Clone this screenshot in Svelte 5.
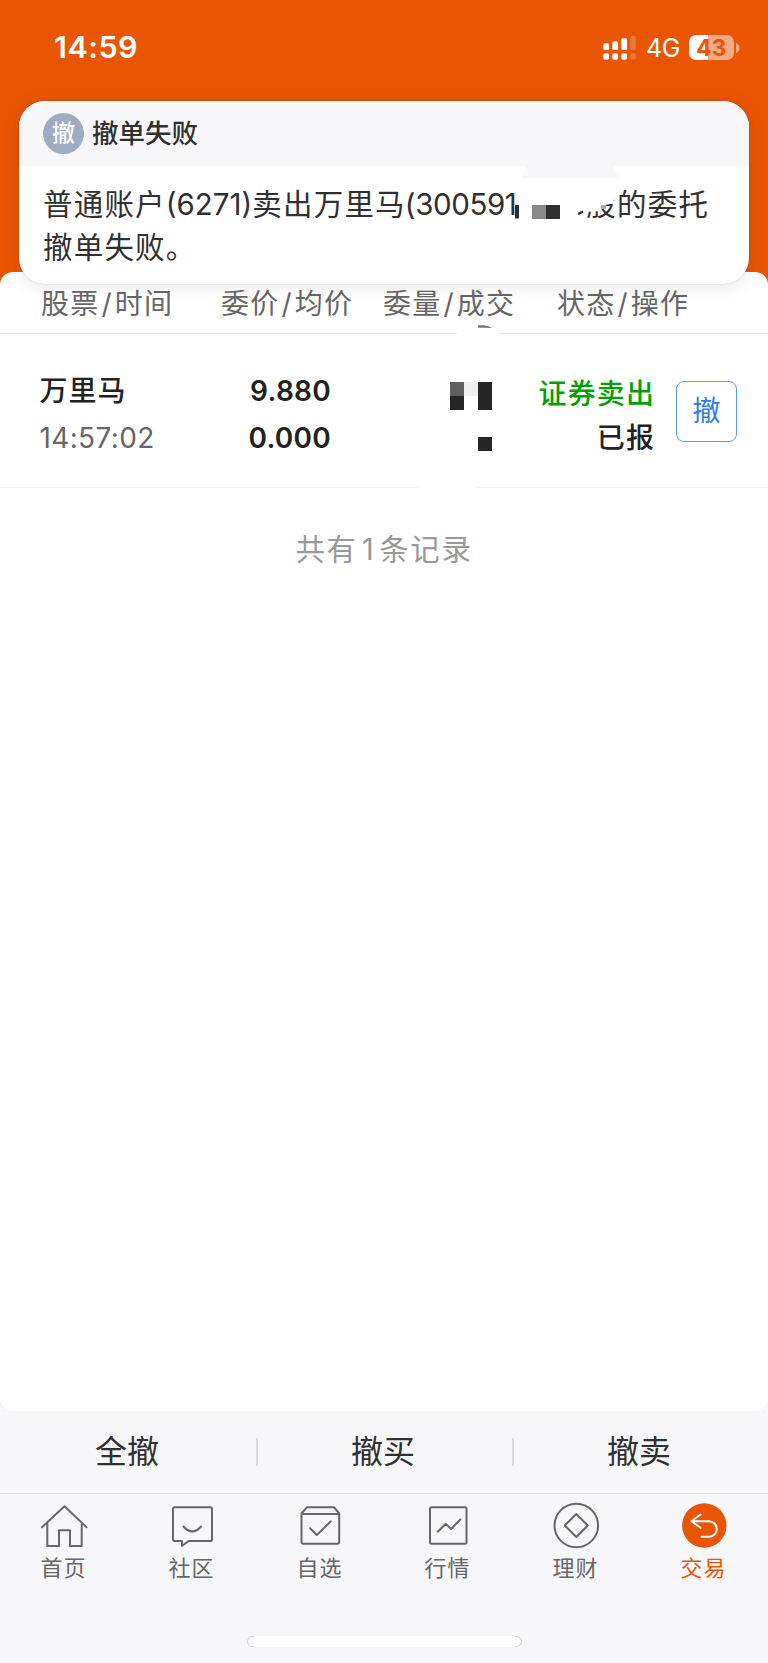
<script>
  const actions = ['全撤', '撤买', '撤卖'];
  const tabs = [
    { id: 'home', label: '首页' },
    { id: 'community', label: '社区' },
    { id: 'watch', label: '自选' },
    { id: 'market', label: '行情' },
    { id: 'wealth', label: '理财' },
    { id: 'trade', label: '交易' }
  ];
</script>

<div class="screen">
  <header class="top">
    <div class="status">
      <span class="clock">14:59</span>
      <svg class="signal" width="34" height="26" viewBox="0 0 34 26" fill="#fff">
        <rect x="0.3" y="8.3" width="5.8" height="6.8" rx="1.6" />
        <rect x="9.3" y="6.3" width="5.8" height="8.8" rx="1.6" />
        <rect x="18.3" y="3.3" width="5.8" height="11.8" rx="1.6" />
        <rect x="0.3" y="18.3" width="5.8" height="6.4" rx="1.6" />
        <rect x="9.3" y="18.3" width="5.8" height="6.4" rx="1.6" />
        <rect x="18.3" y="18.3" width="5.8" height="6.4" rx="1.6" />
        <g opacity=".2">
          <rect x="27.2" y="0.8" width="5.6" height="14.3" rx="1.6" />
          <rect x="27.2" y="18.3" width="5.6" height="6.4" rx="1.6" />
        </g>
      </svg>
      <span class="network">4G</span>
      <div class="battery"><span>43</span></div>
      <svg class="nub" width="4" height="10" viewBox="0 0 4 10"><path d="M0 0Q3.500 1.500 3.500 5T0 10Z" fill="#fff" opacity=".5" /></svg>
    </div>
  </header>

  <main class="panel">
    <div class="cols">
      <span>股票<b>/</b>时间</span>
      <span>委价<b>/</b>均价</span>
      <span>委量<b>/</b>成交</span>
      <span>状态<b>/</b>操作</span>
      <i class="gap"></i>
      <svg class="speck" width="14" height="4" viewBox="0 0 14 4"><path d="M0 .3H6Q11 .8 14 3L6 2.8H0Z" fill="#777" /></svg>
    </div>
    <div class="row">
      <div class="stock">
        <span class="name">万里马</span>
        <span class="time">14:57:02</span>
      </div>
      <div class="price">
        <span>9.880</span>
        <span>0.000</span>
      </div>
      <svg class="amount" width="42" height="70" viewBox="0 0 42 70" shape-rendering="crispEdges">
        <rect width="14" height="14" fill="#606060" />
        <rect x="14" width="14" height="14" fill="#efefef" />
        <rect y="14" width="14" height="14" fill="#262626" />
        <rect x="28" width="14" height="28" fill="#262626" />
        <rect x="28" y="55" width="14" height="14" fill="#262626" />
      </svg>
      <div class="state">
        <span class="sell">证券卖出</span>
        <span>已报</span>
      </div>
      <button class="cancel">撤</button>
      <i class="gap"></i>
    </div>
    <p class="total">共有<b>1</b>条记录</p>
  </main>

  <div class="actions">
    {#each actions as a}
      <button>{a}</button>
    {/each}
  </div>

  <nav class="tabs">
    {#each tabs as t}
      <div class="tab" class:active={t.id === 'trade'}>
        <svg width="48" height="48" viewBox="0 0 48 48" fill="none" stroke="currentColor" stroke-width="2" stroke-linejoin="round" stroke-linecap="round">
          {#if t.id === 'home'}
            <path d="M2 25.2 24.5 4.2 46.500 25.2M7.3 20.5V44H19V28.2H30V44H41.7V20.5" />
          {:else if t.id === 'community'}
            <path d="M6.2 5.2H42.2Q44 5.2 44 7V37.2Q44 39 42.2 39H20.5L14 44V39H7.2Q5 39 5 37.2V7Q5 5.2 6.8 5.2Z" />
            <path d="M15.5 24.5Q24.3 34.5 33 24.5" />
          {:else if t.id === 'watch'}
            <path d="M5.5 11.5 11 5.2H38L43.2 11.5V39.7Q43.2 41.7 41.2 41.7H7.5Q5.5 41.7 5.5 39.7ZM5.5 12H43.2" />
            <path d="M14 26.3 20.8 33 34.7 19.5" />
          {:else if t.id === 'market'}
            <rect x="6" y="5.2" width="36.5" height="36.5" rx="1.5" />
            <path d="M13.7 29.8 21.7 21.8 27.2 27 36.3 17.5" />
          {:else if t.id === 'wealth'}
            <circle cx="24.3" cy="23.5" r="21.8" />
            <path d="M24.3 12 35.8 23.5 24.3 35 12.8 23.5Z" />
          {:else}
            <circle cx="24.3" cy="23.5" r="22.2" fill="currentColor" stroke="none" />
            <path d="M20.5 12.5 11.5 19.2 20.5 25.8M11.5 19.2H29A7.8 7.8 0 0 1 29 34.8H21.5" stroke="#fff" />
          {/if}
        </svg>
        <span>{t.label}</span>
      </div>
    {/each}
  </nav>
  <svg class="home-bar" width="275" height="11" viewBox="0 0 275 11">
    <rect width="275" height="11" rx="5.5" fill="#fff" />
    <path d="M7 .5H5.5A5 5 0 0 0 5.5 10.5H7M268 .5H269.5A5 5 0 0 1 269.5 10.5H268" fill="#f9f9fb" stroke="#c8c8cb" stroke-width=".9" />
  </svg>

  <section class="toast">
    <div class="toast-head">
      <span class="badge">撤</span>
      <strong>撤单失败</strong>
    </div>
    <div class="toast-body">
      <p>普通账户<b>(6271)</b>卖出万里马<b class="code">(300591</b><span class="masked">股的委托</span></p>
      <p>撤单失败。</p>
    </div>
    <svg class="mosaic" width="115" height="56" viewBox="0 0 115 56">
      <path d="M18 0H105L109 12H13Q14 6 18 0Z" fill="#f7f7fa" />
      <path d="M11 19H107V32L101 38 92 40 91 45 77 46 76 56H11Z" fill="#fff" />
      <path d="M69 48 74 45.500" stroke="#303030" stroke-width="2" />
      <rect x="6" y="39" width="4" height="13.500" fill="#303030" />
      <rect x="23" y="39" width="14" height="14" fill="#8b8b8b" />
      <rect x="37" y="39" width="14" height="14" fill="#303030" />
      <rect x="92" y="39" width="5" height="4" fill="#aaa" />
    </svg>
  </section>
</div>

<style>
  :global(body) { margin: 0; }
  .screen {
    position: relative;
    width: 768px;
    height: 1663px;
    overflow: hidden;
    display: flex;
    flex-direction: column;
    background: #f7f7fa;
    color: #303030;
    font-family: Inter, "Noto Sans CJK SC", sans-serif;
  }
  p { margin: 0; }
  b { font-weight: 400; }
  button { font: inherit; color: inherit; background: none; border: 0; padding: 0; }
  .top { height: 273px; margin-bottom: -14px; box-sizing: content-box; padding-bottom: 13px; background: #ea5504; flex: none; }
  .status { display: flex; align-items: center; height: 96px; color: #fff; }
  .clock { width: 549px; padding: 0 0 3px 54px; box-sizing: border-box; margin-right: 54px; font-size: 30.5px; font-weight: 600; letter-spacing: .5px; }
  .signal { flex: none; }
  .network { margin-left: 9px; width: 43px; font-size: 25px; letter-spacing: -.5px; }
  .battery {
    width: 45px; height: 25px; margin-bottom: 1px; border-radius: 7px; display: grid; place-items: center;
    background: linear-gradient(90deg, #fff 19px, rgba(255,255,255,.5) 19px);
  }
  .battery span { color: #ea5504; font-size: 22.5px; line-height: 25px; font-weight: 700; letter-spacing: .5px; }
  .nub { margin-left: 2px; flex: none; }

  .panel { position: relative; height: 1139px; flex: none; border-radius: 13px; background: #fff; }
  .cols {
    position: relative; display: flex; box-sizing: border-box; height: 62px; padding: 9px 0 0 41px;
    border-bottom: 1px solid #e6e6e6; color: #666; font-size: 28px; line-height: 46px; letter-spacing: 1.2px; white-space: nowrap;
  }
  .cols span { width: 180px; }
  .cols span:nth-child(2) { width: 162px; }
  .cols span:nth-child(3) { width: 174px; }
  .cols b { padding: 0 2px; }
  .gap { position: absolute; left: 457px; width: 43px; bottom: -1px; height: 2px; background: #fff; }
  .speck { position: absolute; left: 478px; top: 53px; }
  .row { position: relative; display: flex; box-sizing: border-box; height: 154px; border-bottom: 1px solid #f4f4f5; color: #222; }
  .row .gap { left: 419px; width: 57px; }
  .stock { display: flex; flex-direction: column; width: 200px; padding: 34px 0 0 39.5px; box-sizing: border-box; line-height: 47px; }
  .name { font-size: 28px; font-weight: 500; letter-spacing: 1px; }
  .time { font-size: 28px; letter-spacing: .35px; color: #666; }
  .price { display: flex; flex-direction: column; width: 131px; padding-top: 34px; text-align: right; font-size: 28px; font-weight: 600; line-height: 47px; letter-spacing: .25px; }
  .amount { margin: 48px 0 0 119px; flex: none; }
  .state { display: flex; flex-direction: column; width: 163px; padding-top: 38px; text-align: right; font-size: 28px; font-weight: 500; line-height: 44px; letter-spacing: 1.1px; }
  .sell { color: #00a000; }
  .cancel { width: 61px; height: 61px; margin: 47px 0 0 21px; border: 1.5px solid #5a9cf2; border-radius: 8px; box-sizing: border-box; color: #2b7de9; font-size: 28px; line-height: 57px; }
  .total { margin-top: 38px; text-align: center; font-size: 29.5px; line-height: 46px; letter-spacing: 1.6px; color: #999; }
  .total b { padding: 0 4px; }

  .actions { display: grid; grid-template-columns: repeat(3, 1fr); height: 82px; flex: none; }
  .actions button { position: relative; padding-right: 2px; font-size: 32px; line-height: 82px; }
  .actions button + button::before { content: ""; position: absolute; left: 0; top: 27px; width: 2px; height: 28px; background: #dcdcdf; }
  .tabs { display: grid; grid-template-columns: repeat(6, 1fr); height: 100px; flex: none; border-top: 1px solid #dedee2; color: #666; }
  .tab { display: flex; flex-direction: column; align-items: center; padding: 8px 1px 0 0; }
  .tab svg { flex: none; }
  .tab span { font-size: 22px; line-height: 36px; letter-spacing: 1px; }
  .tab.active { color: #ea5504; }
  .home-bar { display: block; margin: 42px 0 0 247px; flex: none; }

  .toast { position: absolute; left: 19px; top: 100.5px; width: 730px; height: 183px; border-radius: 26px; background: #fff; box-shadow: 0 2px 18px rgba(0,0,0,.1), 0 0 2px rgba(0,0,0,.2); }
  .toast-head { display: flex; align-items: center; height: 65.5px; padding-left: 24px; border-radius: 26px 26px 0 0; background: #f7f7fa; }
  .badge { width: 41px; height: 41px; border-radius: 50%; background: #a0abc3; color: #fff; text-align: center; font-size: 23px; line-height: 40px; font-weight: 500; }
  strong { margin: 0 0 3px 8px; font-size: 26.5px; font-weight: 500; }
  .toast-body { padding: 17px 0 0 24px; font-size: 29.5px; line-height: 43px; letter-spacing: 1.2px; white-space: nowrap; }
  .toast-body b { letter-spacing: 0; }
  .toast-body .code { display: inline-block; width: 104px; margin-left: -1px; letter-spacing: -.4px; }
  .masked { margin-left: 77.5px; }
  .mosaic { position: absolute; left: 490px; top: 65.5px; }
</style>
